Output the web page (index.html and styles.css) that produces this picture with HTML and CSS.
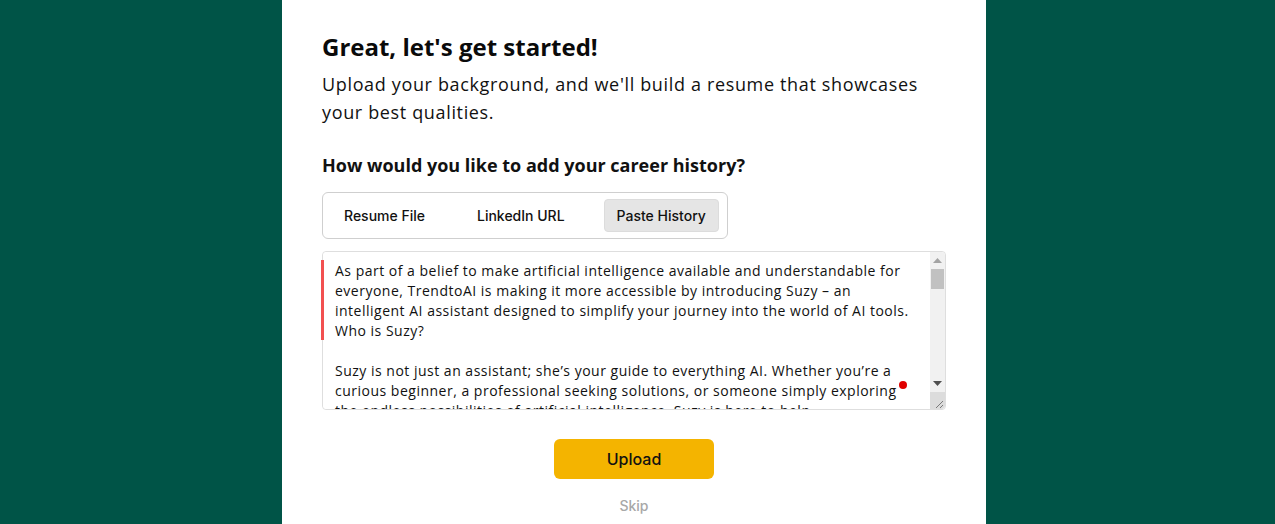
FILE: index.html
```html
<!DOCTYPE html>
<html lang="en">
<head>
<meta charset="utf-8">
<title>Get started</title>
<link rel="stylesheet" href="styles.css">
</head>
<body>
<div class="page">
  <main class="panel">
    <h1 class="title">Great, let's get started!</h1>
    <p class="lead">Upload your background, and we'll build a resume that showcases your best qualities.</p>
    <h2 class="question">How would you like to add your career history?</h2>
    <div class="tabs">
      <button class="tab">Resume File</button>
      <button class="tab">LinkedIn URL</button>
      <button class="tab active">Paste History</button>
    </div>
    <div class="editor">
      <textarea class="history" spellcheck="false">As part of a belief to make artificial intelligence available and understandable for everyone, TrendtoAI is making it more accessible by introducing Suzy – an intelligent AI assistant designed to simplify your journey into the world of AI tools. Who is Suzy?

Suzy is not just an assistant; she’s your guide to everything AI. Whether you’re a curious beginner, a professional seeking solutions, or someone simply exploring the endless possibilities of artificial intelligence, Suzy is here to help.

With a friendly personality and deep knowledge of the latest AI developments, Suzy helps you discover tools, compare features, and find the right solution for your needs.</textarea>
      <div class="scrollbar" aria-hidden="true">
        <span class="sb-btn">
          <svg width="9" height="5" viewBox="0 0 9 5"><path d="M0 5L4.5 0L9 5Z" fill="#a3a3a3"/></svg>
        </span>
        <span class="sb-track"><span class="sb-thumb"></span></span>
        <span class="sb-btn">
          <svg width="9" height="5" viewBox="0 0 9 5"><path d="M0 0L9 0L4.5 5Z" fill="#505050"/></svg>
        </span>
        <span class="sb-corner">
          <svg width="15" height="17" viewBox="0 0 15 17"><path d="M13 9L6 16M13 13L10 16" stroke="#7a7a7a" stroke-width="1"/></svg>
        </span>
      </div>
      <span class="flag"></span>
      <span class="dot"></span>
    </div>
    <div class="actions">
      <button class="upload">Upload</button>
      <button class="skip">Skip</button>
    </div>
  </main>
</div>
</body>
</html>
```
FILE: styles.css
```css
html, body {
  margin: 0;
  height: 100%;
}
body {
  background: #005447;
  font-family: "Open Sans", "Noto Sans", sans-serif;
  color: #111;
}
.page {
  display: flex;
  justify-content: center;
  height: 100%;
}
.panel {
  width: 704px;
  margin-left: -7px;
  background: #fff;
  box-sizing: border-box;
  padding: 30px 40px 0;
}
.title {
  margin: 0;
  font-size: 24px;
  line-height: 34px;
  font-weight: 700;
  color: #0a0a0a;
}
.lead {
  margin: 6px 0 0;
  font-size: 18px;
  line-height: 28px;
  letter-spacing: 0.65px;
  color: #111;
  width: 610px;
}
.question {
  margin: 26px 0 0;
  font-size: 18px;
  line-height: 26px;
  font-weight: 700;
}
.tabs {
  display: inline-flex;
  margin-top: 14px;
  padding: 6px 8px;
  border: 1px solid #cfcfcf;
  border-radius: 6px;
}
.tab {
  font-family: "Inter", "Open Sans", sans-serif;
  font-size: 14px;
  font-weight: 500;
  color: #111;
  background: transparent;
  border: 1px solid transparent;
  border-radius: 4px;
  height: 33px;
  padding: 0 12px;
  margin-right: 26px;
}
.tab.active {
  background: #e5e5e5;
  border-color: #dcdcdc;
  margin-right: 0;
}
.editor {
  position: relative;
  display: flex;
  box-sizing: border-box;
  margin-top: 12px;
  width: 624px;
  height: 159px;
  border: 1px solid #dedede;
  border-radius: 4px;
}
.history {
  flex: 1;
  min-width: 0;
  box-sizing: border-box;
  height: 100%;
  margin: 0;
  padding: 9px 12px;
  font-family: inherit;
  font-size: 14px;
  line-height: 20px;
  letter-spacing: 0.5px;
  color: #111;
  border: none;
  border-radius: 4px 0 0 4px;
  resize: none;
  overflow: hidden;
  outline: none;
  background: #fff;
}
.scrollbar {
  width: 15px;
  display: flex;
  flex-direction: column;
  background: #f1f1f1;
  border-radius: 0 4px 4px 0;
  overflow: hidden;
}
.sb-btn {
  height: 17px;
  display: flex;
  align-items: center;
  justify-content: center;
}
.sb-track {
  flex: 1;
  display: flex;
  flex-direction: column;
  padding: 0 1px;
}
.sb-thumb {
  height: 20px;
  background: #c1c1c1;
}
.sb-corner {
  height: 17px;
  display: block;
  background: #dcdcdc;
}
.sb-corner svg {
  display: block;
}
.flag {
  position: absolute;
  left: -2px;
  top: 8px;
  width: 3px;
  height: 80px;
  background: #f25050;
}
.dot {
  position: absolute;
  left: 576px;
  top: 129px;
  width: 8px;
  height: 8px;
  border-radius: 50%;
  background: #e00000;
}
.actions {
  display: flex;
  flex-direction: column;
  align-items: center;
  margin-top: 29px;
}
.upload {
  width: 160px;
  height: 40px;
  background: #f4b400;
  border: none;
  border-radius: 6px;
  font-family: "Inter", "Open Sans", sans-serif;
  font-size: 16px;
  font-weight: 500;
  color: #111;
}
.skip {
  margin-top: 17px;
  background: none;
  border: none;
  font-family: "Inter", "Open Sans", sans-serif;
  font-size: 14px;
  font-weight: 500;
  color: #a8a8a8;
}
```
